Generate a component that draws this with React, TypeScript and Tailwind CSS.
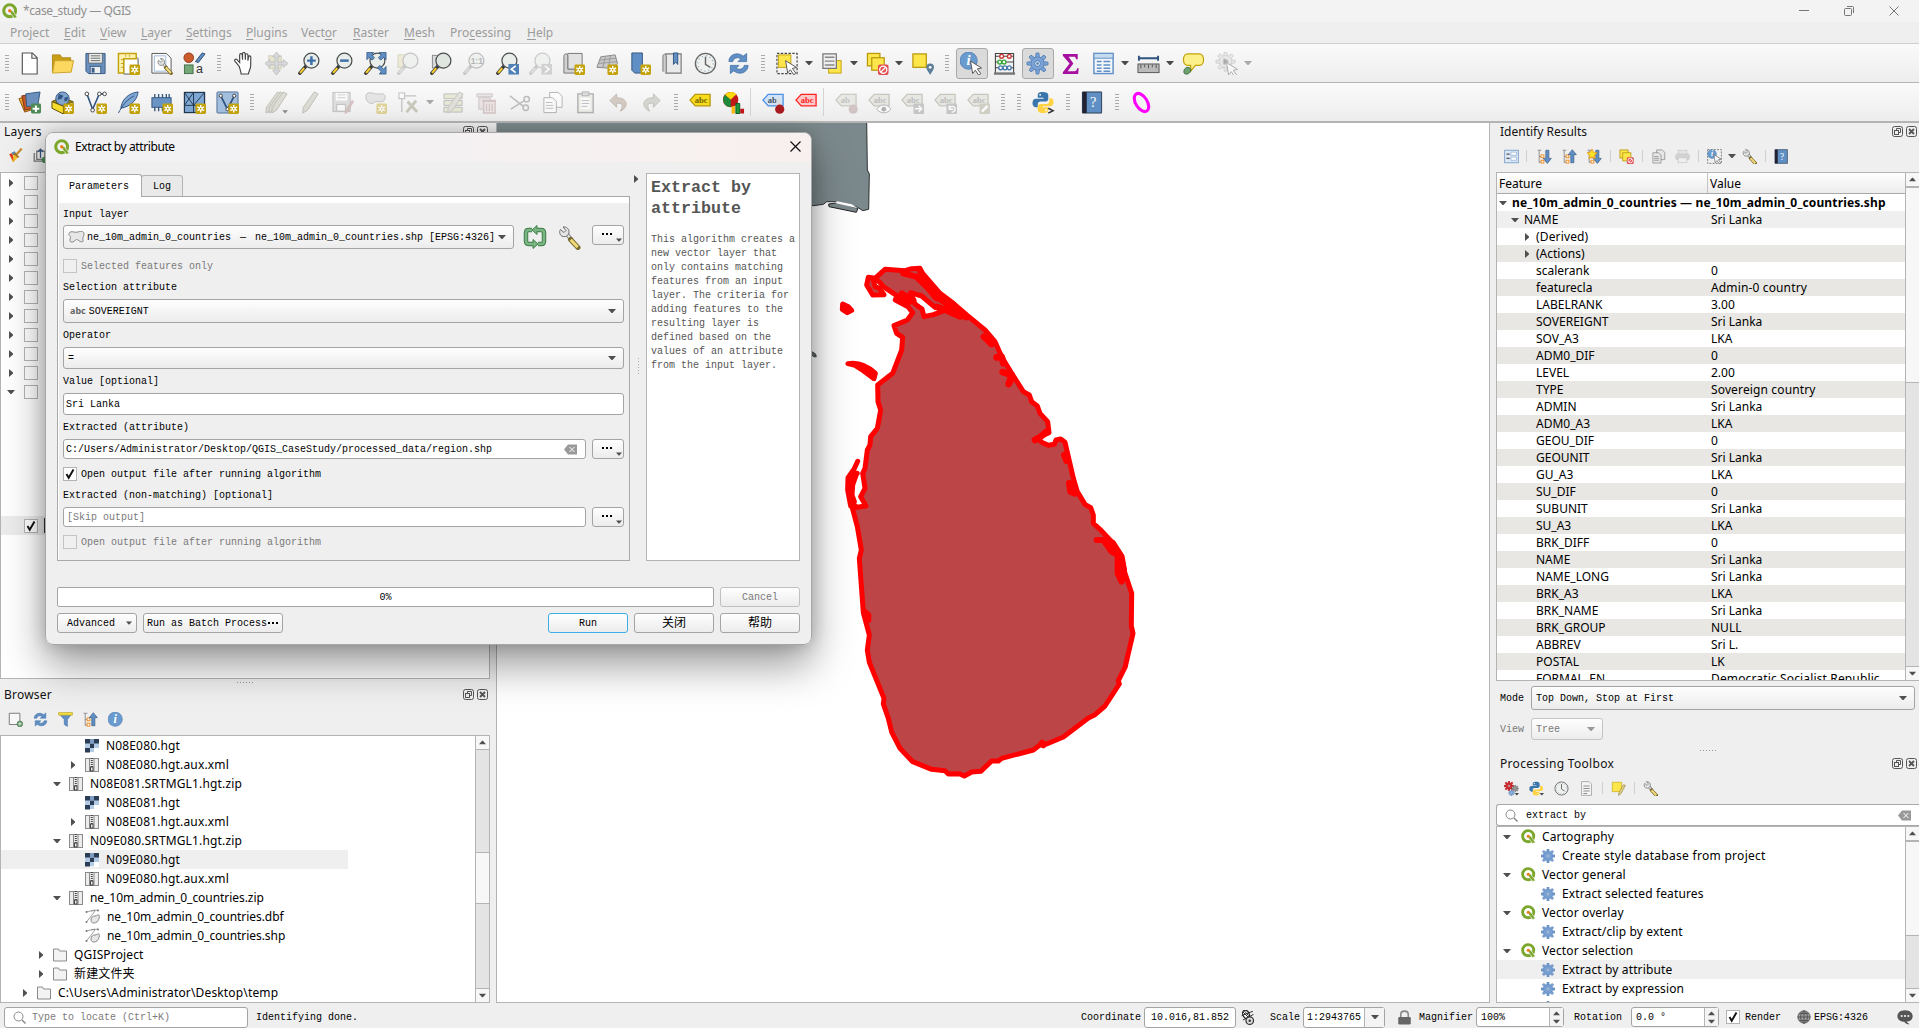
import React from "react";

type P = { children?: React.ReactNode; className?: string };

const SANS = "font-['Noto_Sans','Noto_Sans_CJK_SC',sans-serif]";
const MONO = "font-['Liberation_Mono','Noto_Sans_CJK_SC',monospace]";

const Svg = ({ s = 24, vb = 24, children, className = "" }: { s?: number; vb?: number } & P) => (
  <svg width={s} height={s} viewBox={`0 0 ${vb} ${vb}`} fill="none" className={`shrink-0 ${className}`}>
    {children}
  </svg>
);

/* ---------- shared glyph parts ---------- */
const Star = () => (
  <g>
    <rect x="13" y="13" width="11" height="11" rx="1.5" fill="#c4a20a" />
    <path d="M18.5 14.5v8M15 16.5l7 4M22 16.5l-7 4" stroke="#fff" strokeWidth="1.5" />
    <circle cx="18.5" cy="18.5" r="2" fill="#fff" />
    <circle cx="18.5" cy="18.5" r="0.9" fill="#c4a20a" />
  </g>
);
const Lens = ({ fill = "#e9eeea", handle = "#fcd12a", stroke = "#4b4f50" }) => (
  <g>
    <path d="M8.5 14.5L2 22" stroke={handle === "#ccc" ? "#999" : "#3a3a3a"} strokeWidth="3.6" strokeLinecap="round" />
    <path d="M6.5 16.8L2.2 21.8" stroke={handle} strokeWidth="2.2" />
    <circle cx="14" cy="9" r="7.8" fill={fill} stroke={stroke} strokeWidth="1.3" />
  </g>
);
const Cursor = ({ x = 10, y = 9 }) => (
  <path transform={`translate(${x} ${y})`} d="M0 0l11.5 7.2-4.4.9 3.6 5-2.2 1.6-3.5-5.2L2.2 13z" fill="#fff" stroke="#555" strokeWidth="1" />
);
const Gear = ({ c = "#7ba3d6", d = "#4a78b0", cx = 12, cy = 12, r = 11 }) => (
  <g transform={`translate(${cx} ${cy}) scale(${r / 11})`}>
    {[0, 45, 90, 135, 180, 225, 270, 315].map((a) => (
      <path key={a} transform={`rotate(${a})`} d="M-2.2 -6L-1.4 -11L1.4 -11L2.2 -6z" fill={c} stroke={d} strokeWidth="0.8" />
    ))}
    <circle r="6.800" fill={c} stroke={d} strokeWidth="0.5" />
    <circle r="3" fill="#dbe6f4" stroke={d} strokeWidth="1" />
    <circle r="1.3" fill={d} />
  </g>
);
const Sync = () => (
  <g>
    <path d="M2 10C2 4 8 .5 14 2.5l3 1.8L20.500 1.500V10h-9l3-3C11 5 7 6 6 10z" fill="#5f8fc4" stroke="#3f6fa6" strokeWidth=".8" />
    <path d="M22 14c0 6-6 9.500-12 7.500l-3-1.800L3.500 22.500V14h9l-3 3c3.500 2 7.500 1 8.500-3z" fill="#5f8fc4" stroke="#3f6fa6" strokeWidth=".8" />
  </g>
);
const Python = () => (
  <g>
    <path d="M11 1c-4 0-5 1.300-5 3.500V7h6v1H4C1.500 8 .5 10 .5 12.500S2 17 4 17h2v-3c0-2 1.300-3 3-3h5c1.700 0 3-1.300 3-3V4.500C17 2 15 1 11 1z" fill="#3a76ab" />
    <circle cx="8.500" cy="4" r="1" fill="#fff" />
    <path d="M12 23c4 0 5-1.300 5-3.500V17h-6v-1h8c2.500 0 3.500-2 3.500-4.500S21.500 7.500 19 7.500h-1v3c0 2-1.300 3-3 3H9c-1.700 0-3 1.300-3 3v3C6 22 8 23 12 23z" fill="#ffd342" />
    <circle cx="14.500" cy="20" r="1" fill="#fff" />
  </g>
);
const Wrench = () => (
  <g>
    <path d="M9 8.500L14 14" stroke="#6b6b6b" strokeWidth="4" />
    <path d="M9 8.500L14 14" stroke="#e4e6e4" strokeWidth="2.500" />
    <path d="M2.500 3.500l3.500 3 2-2L5 1C8.500.5 11.500 3 11 7c-1 3-4 4.500-7 3.200C2 9 .8 6 2.500 3.500z" fill="#e4e6e4" stroke="#6b6b6b" />
    <path d="M12.500 13.500l7.500 8" stroke="#7a6a30" strokeWidth="5" strokeLinecap="round" />
    <path d="M12.700 13.700l7 7.400" stroke="#f0d978" strokeWidth="3" />
  </g>
);
const AbcTag = ({ fill, stroke, color, text = "abc" }: { fill: string; stroke: string; color: string; text?: string }) => (
  <g>
    <path d="M1 9.500L6.500 3.500H22v12H6.500z" fill={fill} stroke={stroke} strokeWidth="1.400" />
    <text x="6" y="12.500" fontSize="9" fontWeight="bold" fontFamily="Liberation Serif, serif" fill={color}>{text}</text>
  </g>
);
const Book = () => (
  <g>
    <path d="M1.500 1h20v22h-20z" fill="#5f8fc4" stroke="#2c3e50" />
    <path d="M1.500 1H6v22H1.500z" fill="#223" />
    <text x="9.500" y="17" fontSize="15" fontFamily="Liberation Serif, serif" fill="#fff">?</text>
  </g>
);
const Pencil = ({ x = 0 }) => (
  <path transform={`translate(${x} 0)`} d="M16 1l4 2L9 20l-5 3 .5-6z" fill="#cfcdbf" stroke="#9b9a92" />
);
const Info = ({ x = 0, y = 0, r = 9 }) => (
  <g>
    <circle cx={x + r} cy={y + r} r={r} fill="#6a9bcf" stroke="#4a78b0" strokeWidth=".8" />
    <text x={x + r} y={y + r * 1.55} textAnchor="middle" fontSize={r * 1.7} fontWeight="bold" fontStyle="italic" fontFamily="Liberation Serif, serif" fill="#fff">i</text>
  </g>
);
const TreeArrow = ({ up = false }) => (
  <g>
    <path d="M1 2h6M3.500 2v20M3.500 12H8M3.500 21H8" stroke="#888" strokeWidth="1.400" />
    <rect x="6.500" y="9.500" width="4.500" height="4.500" fill="#fff" stroke="#ef8a1d" strokeWidth="1.500" />
    <rect x="6.500" y="18" width="4.500" height="4.500" fill="#fff" stroke="#ef8a1d" strokeWidth="1.500" />
    <path transform={up ? "" : "matrix(1 0 0 -1 0 24)"} d="M16.500 1l6.500 8h-4v13h-5V9h-4z" fill="#5f8fc4" stroke="#34577f" />
  </g>
);
const QLogo = ({ s = 16 }) => (
  <Svg s={s}>
    <circle cx="11.500" cy="11.500" r="8.900" stroke="#7ca72d" strokeWidth="4.600" />
    <path d="M12 11.500l3.500-.3L23 21.500l-4.500 1.500-6-8z" fill="#7ca72d" stroke="#f4f4f0" strokeWidth="1" />
    <circle cx="11.600" cy="11.600" r="2.500" fill="#ee7913" />
  </Svg>
);

const icons: Record<string, React.ReactNode> = {
  fileNew: <path d="M4.500 1h10.500l5 5v17H4.500zM14.500 1v5.500H20" fill="#fff" stroke="#555" strokeWidth="1.200" />,
  open: <g><path d="M1.500 21V3h8l2 3h9v4" fill="#c99f18" stroke="#b08a1c" /><path d="M1.500 22L4 9h19.500L21 21z" fill="#fcd860" stroke="#c9a22b" /></g>,
  save: <g><path d="M2 1.500h20v21H4.500L2 20z" fill="#6a8fbc" stroke="#3b5d86" /><rect x="5" y="1.500" width="14" height="10" fill="#eef0ee" stroke="#555" strokeWidth=".7" /><path d="M7 4h10M7 6.500h10M7 9h10" stroke="#666" /><rect x="6.500" y="15" width="11" height="7.500" fill="#eee" stroke="#3b5d86" /><rect x="8" y="16.500" width="3" height="5" fill="#3b5d86" /></g>,
  layout: <g><path d="M7 3h11l4 4v16H7z" fill="#fff" stroke="#555" /><path d="M1.500 22V1.500H20V7H7v15z" fill="#fdf2b4" stroke="#c4a20a" strokeWidth="1.500" /><path d="M4 8h3M4 12h3M4 16h3M9 3v2M13 3v2" stroke="#c4a20a" /><Star /></g>,
  layoutMgr: <g><path d="M2 1.500h15l5 5V22H2z" fill="#fff" stroke="#555" /><path d="M4.500 4h12v16h-12z" stroke="#9cb8d8" /><g transform="translate(7 6) scale(.75)"><Wrench /></g></g>,
  style: <g><circle cx="6" cy="6" r="5" fill="#cc5b2b" stroke="#8f3c19" /><path d="M13 10L20 1l3 1-7 9z" fill="#5f8fc4" stroke="#2c4a70" /><rect x="1.500" y="13.500" width="9" height="9" fill="#74a877" stroke="#44704a" /><text x="13.500" y="22" fontSize="13" fontFamily="Liberation Sans" fill="#333">a</text></g>,
  hand: <path d="M7.500 15L3 9.500c-.8-1.500 1-2.600 2.200-1.500L8 11V3c0-1.800 2.500-1.800 2.700 0l.3 5V1.800c.2-1.700 2.500-1.700 2.700 0L14 8V3c.2-1.600 2.400-1.600 2.600 0V9l.6-4c.4-1.400 2.300-1.200 2.400.3L19.500 14c0 3-1.500 5-2.500 9H9.500c0-3-1.500-5.500-2-8z" fill="#fff" stroke="#444" strokeWidth="1.200" />,
  panSel: <g opacity=".55"><rect x="4" y="4" width="13" height="13" fill="#dcd8b0" stroke="#b5b08a" /><path d="M12 0l4 5h-2.500v5.500H19V8l5 4-5 4v-2.500h-5.500V19H16l-4 5-4-5h2.500v-5.500H5V16l-5-4 5-4v2.500h5.500V5H8z" fill="#bfc3c6" stroke="#999" /></g>,
  zoomIn: <g><Lens /><path d="M14 4.500v9M9.500 9h9" stroke="#3f70ab" strokeWidth="2.600" /></g>,
  zoomOut: <g><Lens /><path d="M9.500 9h9" stroke="#3f70ab" strokeWidth="2.600" /></g>,
  zoomFull: <g><Lens /><path d="M3 .5h7L8 3l3 3-2.500 2.500-3-3L3 8zM23 .5h-7l2 2.500-3 3 2.500 2.500 3-3L23 8zM23 23h-7l2-2.500-4-4 2.500-2.500 4 4L23 15z" fill="#5f8fc4" stroke="#2f547f" strokeWidth=".8" /></g>,
  zoomSel: <g opacity=".45"><rect x="1" y="3" width="13" height="13" fill="#e4dfb0" stroke="#b5b08a" /><Lens handle="#ccc" stroke="#888" /></g>,
  zoomLayer: <g><rect x="2.500" y="3.500" width="12" height="13" fill="#d9dcdc" stroke="#888" /><Lens fill="#dfe5df" /></g>,
  zoomNative: <g opacity=".5"><Lens handle="#ccc" stroke="#888" /><text x="8" y="12.500" fontSize="9" fontFamily="Liberation Sans" fontWeight="bold" fill="#777">1:1</text></g>,
  zoomLast: <g><Lens /><rect x="13" y="12.500" width="11" height="11" fill="#4f81b7" /><path d="M20.500 14.500L16 18l4.500 3.500" stroke="#fff" strokeWidth="1.800" /></g>,
  zoomNext: <g opacity=".45"><Lens handle="#ccc" stroke="#999" /><rect x="13" y="12.500" width="11" height="11" fill="#aaa" /><path d="M16.500 14.500L21 18l-4.500 3.500" stroke="#fff" strokeWidth="1.800" /></g>,
  newMap: <g><path d="M6 1.500h15V18H6z" fill="#e2e2e2" stroke="#777" /><path d="M2 22V4.500c0-3.500 4-3.500 4 0V18h15v4z" fill="#d2d2d2" stroke="#777" /><Star /></g>,
  new3d: <g><path d="M6 5l15-2 2.500 9L17 17l-15-1z" fill="#c8c8c8" stroke="#888" /><path d="M11 4.500L8 16.500M16 4l-2 13M4 12l19-2M5 8.500l17-2" stroke="#999" /><Star /></g>,
  newBook: <g><path d="M4 1h11v21H7l-3-3z" fill="#5f8fc4" stroke="#34577f" /><Star /></g>,
  bookmark: <g><path d="M5 2h16v20H5z" fill="#e9e9e9" stroke="#777" strokeWidth="1.200" /><path d="M2 20.500V4.500c0-3 3.500-3 3.500 0V22" fill="#cfcfcf" stroke="#777" /><path d="M13 1h4.500v12l-2.200-2.500L13 13z" fill="#5f8fc4" stroke="#34577f" /></g>,
  clock: <g><circle cx="12" cy="12" r="10.500" fill="#eef1ee" stroke="#666" strokeWidth="1.400" /><path d="M12 5v8l5 3" stroke="#666" strokeWidth="1.500" /><circle cx="12" cy="12" r="8" stroke="#8ba7c7" strokeDasharray="1 3.200" strokeWidth="1.500" /></g>,
  sync: <Sync />,
  select: <g><rect x="1" y="1.500" width="21" height="21" stroke="#444" strokeDasharray="2.500 1.500" strokeWidth="1.200" /><rect x="2.500" y="3" width="13" height="13" fill="#fde64b" stroke="#c4a20a" /><Cursor x={10} y={9} /></g>,
  selForm: <g><rect x="8" y="9" width="13" height="13" fill="#fde64b" stroke="#c4a20a" /><path d="M2 2h14v15H2z" fill="#eee" stroke="#777" strokeWidth="1.300" /><path d="M4 5.500h10M4 9.500h10M4 13.500h10" stroke="#888" strokeWidth="1.500" /></g>,
  deselect: <g><rect x="1.500" y="1.500" width="13" height="13" fill="#fde64b" stroke="#b8980c" strokeWidth="1.300" /><rect x="6" y="6" width="13" height="13" fill="#fde64b" stroke="#b8980c" strokeWidth="1.300" /><rect x="12.500" y="13" width="11" height="11" rx="2" fill="#e04c4f" /><circle cx="18" cy="18.500" r="3.700" stroke="#fff" strokeWidth="1.400" /><path d="M15.500 21l5-5" stroke="#fff" strokeWidth="1.400" /></g>,
  selLoc: <g><rect x="2" y="2" width="14" height="14" fill="#fde64b" stroke="#b8980c" strokeWidth="1.300" /><path d="M20 24c-3-5-4-6-4-8a4 4 0 018 0c0 2-1 3-4 8z" fill="#5b7f98" /><circle cx="20" cy="16" r="1.400" fill="#fff" /></g>,
  identify: <g><Info r={9} x={0} y={0} /><Cursor x={11} y={9.500} /></g>,
  abacus: <g><path d="M2.500 22V1.500h19V22M2.500 4.500h19M2.500 10.500h19M2.500 16.500h19" stroke="#444" strokeWidth="1.100" /><path d="M1 22.500h22" stroke="#777" strokeWidth="2.500" /><g strokeWidth="1.400" fill="#fff"><circle cx="9" cy="4.500" r="2" stroke="#c33" /><circle cx="17" cy="4.500" r="2" stroke="#c33" /><circle cx="7" cy="10.500" r="2" stroke="#3a3" /><circle cx="11.500" cy="10.500" r="2" stroke="#3a3" /><circle cx="8" cy="16.500" r="2" stroke="#47a" /><circle cx="12.500" cy="16.500" r="2" stroke="#47a" /><circle cx="17" cy="16.500" r="2" stroke="#47a" /></g></g>,
  gear: <Gear />,
  sigma: <path d="M4 2h15.500v5.500h-1.700C17.500 5.500 17 5 15 5H10l5 7-6 8h7c2 0 2.500-1 3-3h1.500L20 23H4v-2l7-9L4 4z" fill="#a6109f" />,
  table: <g><rect x="2" y="1.500" width="20" height="21" fill="#f2f6fb" stroke="#5f8fc4" strokeWidth="1.500" /><path d="M2 1.500h20v5H2z" fill="#c7dbf0" stroke="#5f8fc4" /><path d="M5 10h5M12 10h7M5 13.500h5M12 13.500h7M5 17h5M12 17h7M5 20h5M12 20h7" stroke="#5f8fc4" strokeWidth="1.500" /></g>,
  ruler: <g><path d="M2 6.500h20M2 4v5M22 4v5" stroke="#2f547f" strokeWidth="2" /><rect x="1" y="12.500" width="22" height="9" fill="#bbb" stroke="#555" /><path d="M4 13v4M8 13v3M12 13v4M16 13v3M20 13v4" stroke="#555" /></g>,
  bubble: <g><path d="M6 2h12c6 0 6 12 0 12h-4l-5 6v-6H6C0 14 0 2 6 2z" fill="#fbf08a" stroke="#c4a20a" strokeWidth="1.300" /><path d="M2 20c0-2 2-4 4-4s4 2 3 4-3 3.500-5 3-2-1-2-3z" fill="#6da06f" stroke="#3f7043" /></g>,
  action: <g opacity=".45"><Gear c="#ddd" d="#888" cx={11} cy={10} r={10} /><path d="M9 6.500v7l5-3.500z" fill="#555" /><Cursor x={12} y={11} /></g>,
  dsm: <g><path d="M1 8l9-3 6 14-9 3z" fill="#f0a92e" stroke="#8a5312" /><path d="M4 5l10-1 3 14-10 2z" fill="#c35727" stroke="#7c3512" /><path d="M8 3l15-2-2.500 15L9 16z" fill="#6a8fbc" stroke="#34577f" /><rect x="13.500" y="13" width="10.500" height="10.500" rx="1.500" fill="#4d8a57" /><path d="M18.700 15v7M15.200 18.500h7" stroke="#fff" strokeWidth="2" /></g>,
  gpkg: <g><path d="M1 11l9-4 13 4-9 4z" fill="#b89a10" stroke="#5c4d08" /><circle cx="12" cy="8" r="7" fill="#7fa3cc" stroke="#34577f" /><path d="M8 3l5 2-2 3-4 1zM14 7l4-1-1 4-3 1z" fill="#2f547f" /><path d="M1 11l12 5v8L1 18z" fill="#f7dc2a" stroke="#5c4d08" /><path d="M23 11l-10 5v8l10-5z" fill="#fbe96e" stroke="#5c4d08" /><Star /></g>,
  shp: <g><path d="M3 3l6 16L16 3h5" stroke="#2f547f" strokeWidth="1.600" /><g fill="#fff" stroke="#444"><circle cx="3" cy="3" r="1.900" /><circle cx="9" cy="20" r="1.900" /><circle cx="16" cy="3" r="1.900" /><circle cx="21.500" cy="3" r="1.900" /></g><Star /></g>,
  feather: <g><path d="M22 1C12 2 5 9 4 18l4-1c8-3 13-8 14-16z" fill="#7fa8d4" stroke="#2f547f" /><path d="M1.500 23C5 16 10 9 18 5" stroke="#2f547f" /><Star /></g>,
  mem: <g><path d="M5 3v5M9 3v5M13 3v5M17 3v5M5 16v5M9 16v5M13 16v5M20 3v5" stroke="#34577f" strokeWidth="1.400" /><rect x="2" y="7" width="20" height="10" fill="#6a94c4" stroke="#34577f" /><Star /></g>,
  mesh: <g><rect x="1.500" y="1.500" width="21" height="21" fill="#7fa8d4" stroke="#22384f" strokeWidth="1.300" /><path d="M1.500 15h21M11 1.500v21M1.500 1.500L11 15l11.500-13.500M1.500 15L11 1.500" stroke="#22384f" /><Star /></g>,
  virt: <g><rect x="1" y="1" width="22" height="22" rx="1" fill="#a3bfdd" stroke="#4d6f96" /><path d="M5 5l7 14 7-14" stroke="#2f547f" strokeWidth="1.800" /><g fill="#fff" stroke="#444"><circle cx="5" cy="5" r="1.700" /><circle cx="12" cy="19" r="1.700" /><circle cx="19" cy="5" r="1.700" /></g><Star /></g>,
  edits: <g opacity=".6"><Pencil x={-3} /><Pencil x={0} /><Pencil x={3} /><path d="M18 20h6l-3 3.500z" fill="#444" /></g>,
  pencil: <g opacity=".6"><Pencil x={1} /></g>,
  saveEd: <g opacity=".4"><path d="M2 1.500h18v20H2z" fill="#bbb" stroke="#777" /><rect x="5" y="2" width="12" height="8" fill="#fff" /><path d="M7 4h8M7 7h8" stroke="#999" /><rect x="6" y="14" width="9" height="7" fill="#fff" stroke="#777" /><path d="M22 9l2 2-7 12-3 1 1-4z" fill="#a77" /></g>,
  addPoly: <g opacity=".4"><path d="M2 6c0-6 7-4 10-3s10-2 10 3-3 6-7 5-5 3-8 2-5-3-5-7z" fill="#ccc" stroke="#777" /><Star /></g>,
  vertex: <g opacity=".4"><path d="M5 5v17M5 5h15" stroke="#777" strokeWidth="1.300" /><rect x="2" y="2" width="6" height="6" fill="#fff" stroke="#666" /><path d="M10 22L20 10M11 11l10 11" stroke="#8a8868" strokeWidth="3" /></g>,
  modAttr: <g opacity=".5"><path d="M2 3h19v5H2zM2 10h19v5H2zM2 17h19v5H2z" fill="#dcdcb8" stroke="#888" /><Pencil x={2} /></g>,
  trash: <g opacity=".42"><path d="M2 3h16v3H2zM4 7h12v12H4z" fill="#dcc" stroke="#988" /><path d="M7 10h15M9 11h12v12H9zM12 13v8M15 13v8M18 13v8" fill="#ecdcdc" stroke="#a88" strokeWidth="1.500" /></g>,
  cut: <g opacity=".5" stroke="#888" strokeWidth="1.600"><path d="M2 5l14 11M3 19L17 10" /><circle cx="18.500" cy="17.500" r="2.800" /><circle cx="19.500" cy="8.500" r="2.800" /></g>,
  copy: <g opacity=".6"><path d="M9 1.500h9l4 4V17H9z" fill="#fff" stroke="#888" /><path d="M3 7h9l4 4v11.500H3z" fill="#fff" stroke="#888" /><path d="M5 12h7M5 15h8M5 18h8" stroke="#999" /></g>,
  paste: <g opacity=".6"><rect x="4" y="3" width="16" height="19.500" fill="#e8e8e0" stroke="#888" strokeWidth="1.500" /><rect x="8.500" y="1" width="7" height="4" fill="#ccc" stroke="#888" /><path d="M7 7h10v12H7z" fill="#fff" /><path d="M8 10h8M8 13h8M8 16h6" stroke="#999" /></g>,
  undo: <path opacity=".55" d="M10 3L3 10l7 7v-4c5-1 8 1 4 8 9-4 8-14-4-14z" fill="#b9a89a" stroke="#9a8c80" />,
  redo: <path opacity=".55" d="M14 3l7 7-7 7v-4c-5-1-8 1-4 8-9-4-8-14 4-14z" fill="#bcbcb4" stroke="#9a9a90" />,
  abcY: <AbcTag fill="#f6dc1d" stroke="#b8980c" color="#7a6400" />,
  pie: <g><circle cx="9" cy="9" r="8" fill="#c01818" /><path d="M9 9L3 4a8 8 0 0112-.5z" fill="#fbd80e" /><path d="M9 9L3 4a8 8 0 006 13z" fill="#1c8a3a" /><path d="M10 16h3.500v7.500H10z" fill="#fbb80e" /><path d="M14.500 13h4v10.500h-4z" fill="#1c9a3a" stroke="#0b5a20" /><path d="M19 18.500h4v5h-4z" fill="#c01818" /></g>,
  abcB: <g><AbcTag fill="#cfe3fa" stroke="#4d8fe0" color="#456" text="ab" /><path d="M17 7v10" stroke="#ddd" strokeWidth="3.500" /><circle cx="18.500" cy="19" r="4.800" fill="#a81c20" /></g>,
  abcR: <AbcTag fill="#fbc9c9" stroke="#f22" color="#f22" />,
  abc1: <g opacity=".55"><AbcTag fill="#e0e0d8" stroke="#aaa89a" color="#999" text="ab" /><circle cx="19" cy="19" r="4.800" fill="#b9a0a0" /></g>,
  abc2: <g opacity=".6"><AbcTag fill="#e0e0d8" stroke="#aaa89a" color="#999" /><path d="M9 19c4-6 11-6 15 0-4 5-11 5-15 0z" fill="#fff" stroke="#888" /><circle cx="16.500" cy="19" r="2.500" fill="#888" /></g>,
  abc3: <g opacity=".6"><AbcTag fill="#e0e0d8" stroke="#aaa89a" color="#999" /><rect x="13" y="13" width="11" height="11" rx="1" fill="#aaa" /><path d="M14.500 18.500h7M18.500 15.500l3 3-3 3" stroke="#fff" strokeWidth="1.700" /></g>,
  abc4: <g opacity=".6"><AbcTag fill="#e0e0d8" stroke="#aaa89a" color="#999" /><rect x="13" y="13" width="11" height="11" rx="1" fill="#aaa" /><path d="M16 19a3 3 0 112.500 3M16 15v4h4" stroke="#fff" strokeWidth="1.500" /></g>,
  abc5: <g opacity=".6"><AbcTag fill="#e0e0d8" stroke="#aaa89a" color="#999" /><rect x="13" y="13" width="11" height="11" rx="1" fill="#bbb9a5" /><path d="M15.500 21.500l6-6" stroke="#fff" strokeWidth="2.500" /></g>,
  python: <g><Python /><path d="M17 18l5 2.500-5 2.500" stroke="#333" strokeWidth="1.500" /></g>,
  book: <Book />,
  magenta: <ellipse cx="12" cy="12" rx="6" ry="10.500" transform="rotate(-32 12 12)" stroke="#ff00ff" strokeWidth="3.200" />,
};

const Cell = ({ n, on }: { n: string; on?: boolean }) => (
  <div className="flex h-[38px] w-[33px] shrink-0 items-center justify-center">
    <div className={on ? "flex h-[31px] w-[32px] items-center justify-center rounded-[3px] border border-[#a9a9a9] bg-[#dadada]" : "flex items-center justify-center"}>
      <Svg s={23}>{icons[n]}</Svg>
    </div>
  </div>
);
const Grip = ({ w = "w-4" }) => (
  <div className={`flex h-[38px] shrink-0 items-center justify-center ${w}`}>
    <div className="h-[18px] w-[4px] bg-[radial-gradient(circle,#aaa_0.7px,transparent_0.9px)] bg-[size:2px_3px]" />
  </div>
);
const Tri = ({ c = "#4f4f4f", dir = "down", s = 8 }: { c?: string; dir?: string; s?: number }) => (
  <svg width={s} height={s} viewBox="0 0 8 8" className="shrink-0">
    <path d={dir === "down" ? "M0 2h8L4.500 6h-1z" : dir === "up" ? "M0 6h8L4.500 2h-1z" : "M2 0v8L6 4.500v-1z"} fill={c} />
  </svg>
);
const Drop = ({ dim }: { dim?: boolean }) => (
  <div className="flex w-3 shrink-0 items-center pl-[1px]">
    <Tri c={dim ? "#a8a8a8" : "#4a4a4a"} />
  </div>
);
const Sep = () => (
  <div className="flex h-[38px] w-[7px] shrink-0 items-center justify-start"><div className="h-7 w-px bg-[#d4d4d4]" /></div>
);

function render(seq: string) {
  return seq.split(" ").map((t, i) => {
    if (t === "|") return <Grip key={i} />;
    if (t === "v") return <Drop key={i} />;
    if (t === "V") return <Drop key={i} dim />;
    if (t === "/") return <Sep key={i} />;
    if (t.startsWith("!")) return <Cell key={i} n={t.slice(1)} on />;
    return <Cell key={i} n={t} />;
  });
}

const DockHead = ({ title, pl = "pl-1" }: { title: string; pl?: string }) => (
  <div className={`flex h-[17px] shrink-0 items-center justify-between ${pl} ${SANS} text-[12px] text-[#111]`}>
    <span className={title === "Processing Toolbox" ? "tracking-[0.32px]" : title === "Identify Results" ? "" : "tracking-[0.2px]"}>{title}</span>
    <div className="flex gap-[3px] pr-[2px]">
      <Svg s={11} vb={11}><rect x=".5" y=".5" width="10" height="10" rx="2" stroke="#555" /><rect x="2.500" y="4.500" width="4" height="4" stroke="#555" /><path d="M4.500 4V2.500h4v4H7" stroke="#555" /></Svg>
      <Svg s={11} vb={11}><rect x=".5" y=".5" width="10" height="10" rx="2" stroke="#555" /><path d="M3 3l5 5M8 3L3 8" stroke="#555" strokeWidth="1.800" /></Svg>
    </div>
  </div>
);

const Check = ({ on, dim }: { on?: boolean; dim?: boolean }) => (
  <div className={`flex h-[14px] w-[14px] shrink-0 items-center justify-center border ${dim ? "border-[#c4c4c4] bg-[#f0f0f0]" : "border-[#b4b4b4] bg-white"}`}>
    {on && <Svg s={12} vb={12}><path d="M2.500 6l2.200 3.800L9.500 1.500" stroke="#111" strokeWidth="1.900" /></Svg>}
  </div>
);

const Scroll = ({ pre, thumb }: { pre: number; thumb: number }) => (
  <div className="flex w-[14px] shrink-0 flex-col border-l border-[#b4b4b4] bg-[#e4e4e4]">
    <div className="flex h-[14px] items-center justify-center border-b border-[#b4b4b4] bg-[#f7f7f7]"><Tri dir="up" s={7} /></div>
    <div style={{ height: pre }} />
    <div className="border-y border-[#b4b4b4] bg-[#f7f7f7]" style={{ height: thumb }} />
    <div className="flex-1" />
    <div className="flex h-[14px] items-center justify-center border-t border-[#b4b4b4] bg-[#f7f7f7]"><Tri s={7} /></div>
  </div>
);

const ZipI = () => <Svg s={14} vb={14}><rect x=".5" y=".5" width="13" height="13" fill="#ededed" stroke="#8a8a8a" /><path d="M4.500.5v13M9 .5v13" stroke="#8a8a8a" /><path d="M6.800 0v9" stroke="#444" strokeWidth="2" strokeDasharray="1 1" /><rect x="5.500" y="9" width="2.500" height="4" stroke="#444" /></Svg>;
const RasI = () => <Svg s={14} vb={14}><path d="M0 0h14v13H0z" fill="#b4cbe6" /><path d="M0 0h5v4.500H0zM9 0h5v4.500H9zM5 4.500h4v4.500H5zM0 9h5v4.500H0z" fill="#2a3d55" /><path d="M5 0h4v4.500H5z" fill="#7f9dc2" /><path d="M9 9h5v5H9z" fill="#fff" /></Svg>;
const VecI = () => <Svg s={15} vb={15}><path d="M1 3l9-2M1.500 13L10 2M6 2l7-1" stroke="#888" strokeWidth=".8" /><circle cx="1.500" cy="3" r="1" fill="#777" /><circle cx="1.500" cy="13" r="1" fill="#777" /><circle cx="13" cy="1.500" r="1" fill="#777" /><path d="M6 11c0-3 2-4 4-4s3-2 4-1 0 8-5 8c-2 0-3-1-3-3z" fill="#e6e6e6" stroke="#888" /></Svg>;
const DirI = () => <Svg s={14} vb={14}><path d="M.5 13V1H5.500l1 2H13.500v10z" fill="#f3f3f3" stroke="#8a8a8a" /></Svg>;

const browserRows: [number, string, React.ReactNode, string][] = [
  [80, "", <RasI />, "N08E080.hgt"],
  [80, "r", <ZipI />, "N08E080.hgt.aux.xml"],
  [64, "d", <ZipI />, "N08E081.SRTMGL1.hgt.zip"],
  [80, "", <RasI />, "N08E081.hgt"],
  [80, "r", <ZipI />, "N08E081.hgt.aux.xml"],
  [64, "d", <ZipI />, "N09E080.SRTMGL1.hgt.zip"],
  [80, "s", <RasI />, "N09E080.hgt"],
  [80, "", <ZipI />, "N09E080.hgt.aux.xml"],
  [64, "d", <ZipI />, "ne_10m_admin_0_countries.zip"],
  [80, "", <VecI />, "ne_10m_admin_0_countries.dbf"],
  [80, "", <VecI />, "ne_10m_admin_0_countries.shp"],
  [48, "r", <DirI />, "QGISProject"],
  [48, "r", <DirI />, "新建文件夹"],
  [32, "r", <DirI />, "C:\\Users\\Administrator\\Desktop\\temp"],
];

const attrs: [string, string][] = [
  ["scalerank", "0"], ["featurecla", "Admin-0 country"], ["LABELRANK", "3.00"], ["SOVEREIGNT", "Sri Lanka"],
  ["SOV_A3", "LKA"], ["ADM0_DIF", "0"], ["LEVEL", "2.00"], ["TYPE", "Sovereign country"], ["ADMIN", "Sri Lanka"],
  ["ADM0_A3", "LKA"], ["GEOU_DIF", "0"], ["GEOUNIT", "Sri Lanka"], ["GU_A3", "LKA"], ["SU_DIF", "0"],
  ["SUBUNIT", "Sri Lanka"], ["SU_A3", "LKA"], ["BRK_DIFF", "0"], ["NAME", "Sri Lanka"], ["NAME_LONG", "Sri Lanka"],
  ["BRK_A3", "LKA"], ["BRK_NAME", "Sri Lanka"], ["BRK_GROUP", "NULL"], ["ABBREV", "Sri L."], ["POSTAL", "LK"],
  ["FORMAL_EN", "Democratic Socialist Republic ..."],
];

const tools: [boolean, string][] = [
  [true, "Cartography"], [false, "Create style database from project"],
  [true, "Vector general"], [false, "Extract selected features"],
  [true, "Vector overlay"], [false, "Extract/clip by extent"],
  [true, "Vector selection"], [false, "Extract by attribute"], [false, "Extract by expression"], [false, ""],
];

const Small = ({ children, w = 25 }: { children: React.ReactNode; w?: number }) => (
  <div className="flex shrink-0 items-center justify-center" style={{ width: w }}><Svg s={15}>{children}</Svg></div>
);
const SmallSep = () => <div className="flex w-[7px] shrink-0 justify-center"><div className="h-[12px] w-px bg-[#cfcfcf]" /></div>;
const Dots = () => (
  <div className="flex justify-center gap-[2px]">
    {[0, 1, 2, 3, 4, 5].map((i) => <div key={i} className="h-px w-px bg-[#9a9a9a]" />)}
  </div>
);

function LeftDock() {
  return (
    <div className="flex w-[490px] shrink-0 flex-col">
      <DockHead title="Layers" />
      <div className="flex h-[32px] shrink-0 items-center pb-px pl-[3px]">
        <Small><path d="M2 10l9-4 6 8-9 9z" fill="#f2c230" /><path d="M2 10l5-2 2 14z" fill="#e3352f" /><path d="M6 7l5-2 2 5-5 1z" fill="#4a90d9" /><path d="M12 12L22 1" stroke="#c98a2b" strokeWidth="3.500" /><path d="M9 8l8 7" stroke="#a06a1e" strokeWidth="2.500" /></Small>
        <Small><path d="M2 8v13h14M6 5h13v13H6z" stroke="#777" strokeWidth="2" /><path d="M12 16V3M8 6l4-4 4 4" stroke="#34577f" strokeWidth="2" /><circle cx="19" cy="19" r="5" fill="#4d8a57" /></Small>
      </div>
      <div className="h-[507px] w-[490px] shrink-0 overflow-hidden border border-[#b4b4b4] bg-white">
        {Array.from({ length: 12 }, (_, i) => (
          <div key={i} className="flex h-[19px] items-center pl-[6px]">
            <Tri dir={i === 11 ? "down" : "right"} />
            <div className="w-[9px]" />
            <Check />
          </div>
        ))}
        <div className="flex h-[115px] items-center pl-11"><div className="h-[112px] w-2 bg-gradient-to-b from-[#ddd] to-black" /></div>
        <div className="flex h-[19px] items-center bg-[#ececec] pl-[23px]"><Check on /><div className="ml-[6px] h-[15px] w-4 border border-[#333] bg-[#7c898c]" /></div>
      </div>
      <div className="flex h-[6px] flex-col justify-center"><Dots /></div>
      <div className="h-[1px]" />
      <DockHead title="Browser" />
      <div className="flex h-[32px] shrink-0 items-center pl-[3px]">
        <Small><path d="M2 2h17v18H2z" fill="#f7f7f7" stroke="#777" strokeWidth="1.500" /><circle cx="19" cy="19" r="4.500" fill="#6da06f" stroke="#3f7043" /><path d="M19 16v6M16 19h6" stroke="#fff" /></Small>
        <Small><Sync /></Small>
        <Small><path d="M1 2h22l-8 10v11l-5-3v-8z" fill="#5f8fc4" stroke="#4a78b0" /><path d="M1 1h22v4H1z" fill="#f4e04a" stroke="#c4a20a" /></Small>
        <Small><TreeArrow up /></Small>
        <Small><Info r={11.500} /></Small>
      </div>
      <div className="flex min-h-0 flex-1 border border-[#b4b4b4] bg-white">
        <div className={`flex-1 overflow-hidden ${SANS} text-[12px] text-black`}>
          {browserRows.map(([x, st, ic, t], i) => (
            <div key={i} className={`flex h-[19px] items-center whitespace-nowrap ${st === "s" ? "w-[347px] bg-[#efefef]" : ""}`}>
              <div className="flex shrink-0 justify-end pr-[8px]" style={{ width: x + 4 }}>
                {st === "r" && <Tri dir="right" />}{st === "d" && <Tri />}
              </div>
              {ic}
              <span className={`ml-[7px] ${t.startsWith("ne_") ? "tracking-[-0.05px]" : "tracking-[0.15px]"}`}>{t}</span>
            </div>
          ))}
        </div>
        <Scroll pre={102} thumb={52} />
      </div>
    </div>
  );
}

function MapCanvas() {
  return (
    <div className="ml-[6px] h-full min-w-0 flex-1 overflow-hidden border-x border-b border-[#b4b4b4] bg-white">
      <svg width="992" height="880" viewBox="497 123 992 880" fill="none">
        <g transform="translate(480 120) scale(.33333)">
          <path d="M0 0H1160L1162 150L1168 162L1166 268L1148 272L1133 262L1064 245L1040 245L1030 253L1000 257L0 260z" fill="#7c898c" stroke="#2b2f30" strokeWidth="3" />
          <path d="M1046 252l30-4 58 17-5 12-82-17z" fill="#7c898c" stroke="#222" strokeWidth="3" />
          <path d="M1065 249l68 16-18-12-44-9z" fill="#fff" />
          <path d="M985 688l22 14 2 8-6 1-22-15z" fill="#5f6a6d" stroke="#222" strokeWidth="2" />
        </g>
        <g transform="translate(820 240) scale(.33333)" stroke="#f00" strokeWidth="15" strokeLinejoin="round" strokeLinecap="round">
          <path fill="#bc4547" d="M165 115L195 88L255 92L275 86L300 85L308 100L360 160L400 190L440 225L495 270L525 305L545 350L575 400L588 420L610 455L628 465L635 485L652 498L660 520L683 545L687 578L650 595L668 608L685 616L703 613L708 600L722 597L735 607L745 650L760 715L772 755L795 793L812 803L820 825L820 850L840 868L875 905L905 955L914 997L935 1060L934 1158L939 1180L918 1270L916 1280L895 1322L898 1332L855 1398L825 1424L805 1434L730 1491L680 1512L666 1510L640 1530L545 1555L535 1563L515 1563L482 1594L455 1596L433 1608L418 1601L385 1602L375 1592L335 1588L278 1565L240 1525L215 1476L205 1435L190 1392L192 1375L148 1267L142 1230L148 1185L130 1118L118 955L124 930L112 860L92 785L110 802L138 798L122 770L135 745L128 700L135 685L142 630L150 615L152 590L172 565L182 510L174 485L173 435L218 400L245 330L248 292L230 280L222 257L262 240L278 218L264 200L226 180L235 170L190 140L180 128z" />
          <path fill="#fff" d="M272 158L305 168L345 202L378 210L340 224L312 230L306 207L285 192z" />
          <path d="M165 115L145 112L140 135L158 165L192 164L178 145L165 140L160 120" fill="#bc4547" />
          <path d="M250 100L288 110L360 178L430 226M300 95L360 170M228 178L270 185L245 160L280 180M350 200L440 232M380 212L420 230" strokeWidth="18" />
          <path d="M310 122L350 172" strokeWidth="24" />
          <path d="M68 192L67 208L82 218L95 211L85 200z" fill="#f00" />
          <path d="M84 371C115 366 145 380 166 400L162 416L130 392L105 376z" fill="#f00" />
          <path d="M113 664L102 688L84 713L83 750L92 798M110 700L98 735L96 765L103 785M112 700L90 720L90 770" />
          <path d="M492 290L515 312M530 352L545 350L550 370M548 396L575 405L566 432L575 415M645 600L660 592L680 575M733 645L740 662M748 730L752 755L765 760" strokeWidth="20" />
          <path d="M830 900L850 900L875 935L893 945L893 1000L905 1025L912 990L905 950L878 908M134 1115L145 1125L145 1140M666 1508L670 1516" strokeWidth="18" />
        </g>
      </svg>
    </div>
  );
}

function RightDock() {
  return (
    <div className="ml-[6px] flex w-[423px] shrink-0 flex-col">
      <DockHead title="Identify Results" pl="pl-[4px]" />
      <div className="flex h-[32px] shrink-0 items-center pl-[3px]">
        <Small w={24}><rect x="1" y="2" width="22" height="20" fill="#dce8f5" stroke="#7fa3cc" strokeWidth="1.500" /><path d="M4 8h5M4 15h5" stroke="#555" strokeWidth="2" /><path d="M11 5h9v5h-9zM11 13h9v5h-9z" fill="#fff" stroke="#7fa3cc" /></Small>
        <SmallSep />
        <div className="w-[2px]" /><Small><TreeArrow /></Small><Small><TreeArrow up /></Small>
        <Small><TreeArrow /><path d="M8 0l2.500 5 5.500.8-4 4 1 5.700-5-2.700-5 2.700 1-5.700-4-4L5.500 5z" fill="#fbe02a" stroke="#e58f12" strokeWidth="1.200" /></Small>
        <SmallSep /><Small>{icons.deselect}</Small><SmallSep />
        <Small w={24}><g stroke="#777"><path d="M9 1.500h9l4 4V17H9z" fill="#e6e6e6" /><path d="M3 6h9l4 4v12.500H3z" fill="#e6e6e6" /><path d="M5 12h7M5 15h8M5 18h8" /></g></Small>
        <Small><g opacity=".5"><rect x="5" y="2" width="14" height="7" fill="#ddd" stroke="#999" /><rect x="1" y="8" width="22" height="9" rx="3" fill="#bbb" stroke="#999" /><rect x="5" y="14" width="14" height="8" fill="#eee" stroke="#999" /></g></Small>
        <SmallSep />
        <Small w={24}><rect x="1" y="1" width="22" height="22" stroke="#777" strokeDasharray="3 2" strokeWidth="1.500" /><Info r={7} x={1} y={1} /><Cursor x={11} y={9} /></Small>
        <div className="flex w-[11px] justify-center"><Tri /></div>
        <Small><g transform="scale(1.08)"><Wrench /></g></Small><SmallSep /><Small>{icons.book}</Small>
      </div>
      <div className="flex h-[509px] shrink-0 border border-r-0 border-[#b4b4b4] bg-white">
        <div className={`flex-1 overflow-hidden whitespace-nowrap ${SANS} text-[12px] text-black`}>
          <div className="flex h-[21px] items-center border-b border-[#a9a9a9] bg-gradient-to-b from-white to-[#ececec] leading-[22px]">
            <div className="h-full w-[211px] border-r border-[#c4c4c4] pl-[2px]">Feature</div>
            <div className="h-full pl-[2px]">Value</div>
          </div>
          <div className="flex h-[17px] items-center pl-[2px] font-bold"><Tri /><span className="ml-[5px] tracking-[0.14px]">ne_10m_admin_0_countries — ne_10m_admin_0_countries.shp</span></div>
          <div className="flex h-[17px] items-center bg-[#efefef]"><div className="flex w-[214px] items-center pl-[14px]"><Tri /><span className="ml-[5px]">NAME</span></div>Sri Lanka</div>
          <div className="flex h-[17px] items-center pl-[26px] tracking-[0.15px]"><Tri dir="right" /><span className="ml-[5px]">(Derived)</span></div>
          <div className="flex h-[17px] items-center bg-[#e8e7e3] pl-[26px]"><Tri dir="right" /><span className="ml-[5px]">(Actions)</span></div>
          {attrs.map(([k, v], i) => (
            <div key={i} className={`flex h-[17px] items-center ${i % 2 ? "bg-[#e8e7e3]" : "bg-white"}`}>
              <div className="w-[214px] shrink-0 pl-[39px]">{k}</div><span className={v.length > 12 ? "tracking-[0.14px]" : ""}>{v}</span>
            </div>
          ))}
        </div>
        <Scroll pre={0} thumb={196} />
      </div>
      <div className={`flex h-[34px] items-center pl-[3px] pr-[4px] ${MONO} text-[10px] text-black`}>
        <span className="w-[32px] pl-[1px]">Mode</span>
        <Combo className="h-[24px] flex-1">Top Down, Stop at First</Combo>
      </div>
      <div className={`flex h-[28px] items-center pl-[3px] ${MONO} text-[10px] text-[#7a7a7a]`}>
        <span className="w-[32px] pl-[1px]">View</span>
        <Combo className="h-[22px] w-[72px]" dim>Tree</Combo>
      </div>
      <div className="flex h-[8px] flex-col justify-end"><Dots /></div>
      <div className="h-[4px]" />
      <DockHead title="Processing Toolbox" pl="pl-[4px]" />
      <div className="flex h-[32px] shrink-0 items-center pl-[3px]">
        <Small><Gear c="#d4262c" d="#a3151a" cx={8} cy={8} r={8} /><Gear c="#888" d="#666" cx={18} cy={12} r={5.500} /><Gear cx={12} cy={19} r={5} /><path d="M17 19h7l-3.500 4z" fill="#444" /></Small>
        <Small><Python /><path d="M17 19h7l-3.500 4z" fill="#444" /></Small>
        <Small>{icons.clock}</Small>
        <Small><path d="M4 1h12l4 4v18H4z" fill="#f4f4f4" stroke="#888" /><path d="M7 8h10M7 12h10M7 16h10M7 20h6" stroke="#888" strokeWidth="1.500" /></Small>
        <SmallSep />
        <Small><path d="M2 2h15v15H2z" fill="#fde64b" stroke="#c4a20a" /><path d="M20 6l3 1-7 13-4 3 1-5z" fill="#e8d98c" stroke="#887733" /></Small>
        <SmallSep /><Small><g transform="scale(1.08)"><Wrench /></g></Small>
      </div>
      <div className="flex h-[22px] shrink-0 items-center justify-between rounded-l-[3px] border border-r-0 border-[#a9a9a9] bg-white pl-[8px] pr-[8px]">
        <div className={`flex items-center gap-[8px] ${MONO} text-[10px]`}>
          <Svg s={13} vb={13}><circle cx="5.500" cy="5.500" r="4.500" stroke="#888" /><path d="M9 9l3.500 3.500" stroke="#888" strokeWidth="1.500" /></Svg>
          <span>extract by</span>
        </div>
        <Clear />
      </div>
      <div className="flex min-h-0 flex-1 border border-r-0 border-[#b4b4b4] bg-white">
        <div className={`flex-1 overflow-hidden whitespace-nowrap ${SANS} text-[12px] text-black`}>
          {tools.map(([top, t], i) =>
            top ? (
              <div key={i} className="flex h-[19px] items-center pl-[6px]"><Tri /><div className="w-[10px]" /><QLogo s={15} /><span className="ml-[6px] tracking-[0.12px]">{t}</span></div>
            ) : (
              <div key={i} className={`flex h-[19px] items-center pl-[44px] ${i === 7 ? "bg-[#efefef]" : ""}`}><Svg s={14}><Gear r={12} /></Svg><span className={`ml-[7px] ${i === 1 ? "tracking-[0.29px]" : "tracking-[0.13px]"}`}>{t}</span></div>
            )
          )}
        </div>
        <Scroll pre={0} thumb={95} />
      </div>
    </div>
  );
}

const Clear = () => (
  <Svg s={13} vb={13}><path d="M4 1.500h9v10H4L0 6.500z" fill="#999" /><path d="M5.500 4l5 5M10.500 4l-5 5" stroke="#fff" /></Svg>
);
const Combo = ({ children, className = "", dim }: P & { dim?: boolean }) => (
  <div className={`flex items-center justify-between whitespace-nowrap rounded-[3px] border bg-gradient-to-b from-[#fefefe] to-[#ececec] pl-[4px] pr-[7px] ${dim ? "border-[#c4c4c4]" : "border-[#a4a4a4]"} ${className}`}>
    <span className="flex min-w-0 items-center overflow-hidden">{children}</span>
    <Tri c={dim ? "#999" : "#4f4f4f"} />
  </div>
);
const Btn = ({ children, className = "" }: P) => (
  <div className={`flex h-[20px] shrink-0 items-center justify-center whitespace-nowrap rounded-[3px] border bg-gradient-to-b from-[#fefefe] to-[#ececec] ${className}`}>{children}</div>
);
const Ellipsis = () => (
  <span className="inline-flex w-[12px] justify-around">
    <i className="h-[2px] w-[2px] bg-black" /><i className="h-[2px] w-[2px] bg-black" /><i className="h-[2px] w-[2px] bg-black" />
  </span>
);
const DotsBtn = ({ h = "h-[20px]" }) => (
  <Btn className={`relative w-[32px] self-start border-[#a4a4a4] pb-[3px] ${h}`}>
    <span className="-ml-[2px] flex"><Ellipsis /></span>
    <span className="absolute bottom-[1px] right-[1px] flex"><Tri s={6} /></span>
  </Btn>
);
const Label = ({ children, className = "" }: P) => <div className={`flex items-center ${className}`}>{children}</div>;
const Field = ({ children, className = "" }: P) => (
  <div className={`flex items-center justify-between rounded-[3px] border border-[#a4a4a4] bg-white pl-[2px] ${className}`}>{children}</div>
);

function Dialog() {
  return (
    <div className={`absolute left-[45px] top-[132px] flex h-[513px] w-[767px] flex-col overflow-hidden rounded-[8px] border border-[#a6a6a6] bg-[#efefef] ${MONO} text-[10px] text-black`}>
      <div className="flex h-[29px] shrink-0 items-center bg-gradient-to-r from-[#f1f1f3] via-[#f4f1f2] to-[#f8f0ee] pb-[2px] pl-[8px] pr-[10px]">
        <QLogo s={16} />
        <span className={`ml-[5px] flex-1 ${SANS} text-[12px] tracking-[-0.4px]`}>Extract by attribute</span>
        <Svg s={11} vb={11}><path d="M.5.5l10 10M10.500.5l-10 10" stroke="#111" strokeWidth="1.200" /></Svg>
      </div>
      <div className="flex h-[399px] shrink-0 pl-[11px] pr-[11px] pt-[11px]">
        <div className="flex w-[573px] flex-col">
          <div className="flex h-[23px] items-end">
            <div className="z-10 -mb-px flex h-[23px] w-[85px] items-center justify-center rounded-t-[3px] border border-b-0 border-[#a9a9a9] bg-white pr-px">Parameters</div>
            <div className="-ml-px flex h-[21px] w-[42px] items-center justify-center rounded-t-[3px] border border-b-0 border-[#b4b4b4] bg-[#e9e9e9]">Log</div>
          </div>
          <div className="flex h-[365px] flex-col border border-[#a9a9a9] bg-white pt-[6px]">
            <div className="ml-[1px] flex flex-1 flex-col bg-[#efefef] pl-[4px] pr-[5px]">
              <Label className="h-[22px]">Input layer</Label>
              <div className="flex h-[24px] items-center">
                <Combo className="h-[24px] w-[451px]">
                  <Svg s={18} vb={18}><path d="M2 4c3-1 5 1 8 0s6-1 6 2-2 3-1 6-3 2-5 0-4 3-7 2 1-5-1-6-1-3 0-4z" fill="#e6e6e6" stroke="#8a8a8a" /></Svg>
                  <span className="ml-[1px]">ne_10m_admin_0_countries <span className="inline-block w-[12px] text-center">—</span> ne_10m_admin_0_countries.shp [EPSG:4326]</span>
                </Combo>
                <div className="flex w-[41px] justify-center">
                  <Svg s={24}>
                    <path d="M9 5H5.500Q3 5 3 8v8q0 3 3 3h4M15 19h3.500q2.500 0 2.500-3V8q0-3-3-3h-4" stroke="#3f7f4a" strokeWidth="4.500" />
                    <path d="M10 14.500V23.500L15 19zM14 .5V9.500L9 5z" fill="#7bb583" stroke="#3f7f4a" />
                    <path d="M9 5H5.500Q3 5 3 8v8q0 3 3 3h5M15 19h3.500q2.500 0 2.500-3V8q0-3-3-3h-5" stroke="#7bb583" strokeWidth="2.500" />
                  </Svg>
                </div>
                <div className="flex w-[30px] justify-center pt-[2px]"><Svg s={24}><Wrench /></Svg></div>
                <div className="flex-1" />
                <DotsBtn h="h-[19px]" />
              </div>
              <Label className="mt-[10px] h-[14px] text-[#7a7a7a]"><Check dim /><span className="ml-[4px]">Selected features only</span></Label>
              <Label className="mt-[3px] h-[23px]">Selection attribute</Label>
              <Combo className="h-[24px]"><b className={`mr-[3px] pl-[2px] ${SANS} text-[9px] leading-3 text-[#666]`}>abc</b>SOVEREIGNT</Combo>
              <Label className="h-[24px]">Operator</Label>
              <Combo className="h-[22px]">=</Combo>
              <Label className="h-[24px]">Value [optional]</Label>
              <Field className="h-[22px]">Sri Lanka</Field>
              <Label className="h-[24px]">Extracted (attribute)</Label>
              <div className="flex h-[20px] justify-between">
                <Field className="w-[523px] pr-[8px]"><span>C:/Users/Administrator/Desktop/QGIS_CaseStudy/processed_data/region.shp</span><Clear /></Field>
                <DotsBtn />
              </div>
              <Label className="mt-[8px] h-[14px]"><Check on /><span className="ml-[4px]">Open output file after running algorithm</span></Label>
              <Label className="mt-[3px] h-[23px]">Extracted (non-matching) [optional]</Label>
              <div className="flex h-[20px] justify-between">
                <Field className="w-[523px] text-[#7a7a7a]"><span className="pl-[1px]">[Skip output]</span></Field>
                <DotsBtn />
              </div>
              <Label className="mt-[8px] h-[14px] text-[#7a7a7a]"><Check dim /><span className="ml-[4px]">Open output file after running algorithm</span></Label>
            </div>
          </div>
        </div>
        <div className="flex w-[16px] flex-col items-start justify-between pb-[185px] pl-[2px] pt-[2px]">
          <Tri dir="right" />
          <div className="ml-[6px] h-[18px] w-px bg-[repeating-linear-gradient(to_bottom,#aaa_0_1px,transparent_1px_3px)]" />
        </div>
        <div className="h-[388px] w-[154px] border border-[#b4b4b4] bg-white px-[4px] pt-[3px]">
          <div className="text-[16.66px] font-bold leading-[21px] text-[#555]">Extract by<br />attribute</div>
          <p className="mt-[14px] whitespace-nowrap leading-[14px] text-[#555]">
            This algorithm creates a<br />new vector layer that<br />only contains matching<br />features from an input<br />layer. The criteria for<br />adding features to the<br />resulting layer is<br />defined based on the<br />values of an attribute<br />from the input layer.
          </p>
        </div>
      </div>
      <div className="mt-[26px] flex shrink-0 gap-[6px] pl-[11px]">
        <div className="flex h-[20px] w-[657px] items-center justify-center rounded-[2px] border border-[#a4a4a4] bg-white">0%</div>
        <Btn className="w-[80px] border-[#c0c0c0] text-[#7a7a7a]">Cancel</Btn>
      </div>
      <div className="mt-[6px] flex shrink-0 gap-[6px] pl-[11px]">
        <Btn className="w-[80px] gap-[11px] border-[#a4a4a4] pl-[5px]">Advanced <Tri s={6} /></Btn>
        <Btn className="w-[140px] border-[#a4a4a4]">Run as Batch Process<Ellipsis /></Btn>
        <div className="w-[253px]" />
        <Btn className="w-[80px] border-[#3daee9] from-white to-[#e9f1f8]">Run</Btn>
        <Btn className="w-[80px] border-[#a4a4a4] pt-[2px] text-[12px]">关闭</Btn>
        <Btn className="w-[80px] border-[#a4a4a4] pt-[2px] text-[12px]">帮助</Btn>
      </div>
    </div>
  );
}

const Spin = ({ children, className = "" }: P) => (
  <div className={`flex h-[20px] items-stretch rounded-[3px] border border-[#a4a4a4] bg-white ${className}`}>
    <span className="flex flex-1 items-center pl-[4px]">{children}</span>
    <div className="flex w-[14px] flex-col items-center justify-center gap-[1px] border-l border-[#b4b4b4] bg-[#f4f4f4]"><Tri dir="up" s={7} /><Tri s={7} /></div>
  </div>
);

function StatusBar() {
  return (
    <div className={`flex h-[25px] shrink-0 items-center pt-[2px] ${MONO} whitespace-pre text-[10px] text-black`}>
      <div className="ml-[4px] mt-px flex h-[21px] w-[244px] items-center rounded-[3px] border border-[#a4a4a4] bg-white pl-[8px] text-[#7a7a7a]">
        <Svg s={13} vb={13}><circle cx="5.500" cy="5.500" r="4.500" stroke="#888" /><path d="M9 9l3.500 3.500" stroke="#888" strokeWidth="1.500" /></Svg>
        <span className="ml-[6px]">Type to locate (Ctrl+K)</span>
      </div>
      <span className="ml-[8px] w-[825px] pt-[2px]">Identifying done.</span>
      <div className="mt-px flex h-[21px] items-center">
        <span className="w-[63px]">Coordinate</span>
        <div className="flex h-[21px] w-[92px] items-center justify-center rounded-[3px] border border-[#a4a4a4] bg-white">10.016,81.852</div>
        <div className="flex w-[34px] items-center pl-[5px]"><Svg s={15}><ellipse cx="8" cy="7" rx="5" ry="7" transform="rotate(-25 8 7)" fill="#fff" stroke="#222" strokeWidth="2" /><path d="M3 3l9 9M5 1l7 8M1 9l18-7M3 16l17-9" stroke="#222" strokeWidth="1.500" /><circle cx="14" cy="17" r="6" fill="#ddd" stroke="#333" strokeWidth="2" /><circle cx="14" cy="17" r="2" fill="#333" /></Svg></div>
        <span className="w-[33px]">Scale</span>
        <div className="flex h-[21px] w-[82px] items-stretch rounded-[3px] border border-[#a4a4a4] bg-white">
          <span className="flex w-[61px] items-center border-r border-[#b4b4b4] pl-[3px]">1:2943765</span>
          <span className="flex flex-1 items-center justify-center bg-[#f4f4f4]"><Tri /></span>
        </div>
        <div className="flex w-[34px] justify-center pl-[4px]"><Svg s={15}><path d="M6 12V7c0-7 12-7 12 0v5" stroke="#888" strokeWidth="2.500" /><rect x="2" y="11" width="20" height="12" rx="2" fill="#666" /></Svg></div>
        <span className="w-[57px]">Magnifier</span>
        <Spin className="w-[88px]">100%</Spin>
        <span className="ml-[10px] w-[57px]">Rotation</span>
        <Spin className="w-[88px]">0.0 °</Spin>
        <div className="ml-[7px] flex w-[19px]"><Check on /></div>
        <span className="w-[52px]">Render</span>
        <Svg s={14} className="mr-[3px]"><circle cx="12" cy="12" r="10.500" fill="#999" stroke="#555" strokeWidth="1.500" /><path d="M1 12h22M12 1v22M4 6h16M4 18h16M12 1c-8 6-8 16 0 22M12 1c8 6 8 16 0 22" stroke="#444" strokeWidth="1.200" /></Svg>
        <span className="w-[83px]">EPSG:4326</span>
        <Svg s={16}><path d="M12 2c15 0 15 17 2 17l5 4c-5 0-7-2-8-4C-3 19-3 2 12 2z" fill="#555" /><path d="M5.500 10.500h3M10.500 10.500h3M15.500 10.500h3" stroke="#fff" strokeWidth="2.500" /></Svg>
      </div>
    </div>
  );
}

const menu: [string, string, string, number][] = [
  ["Pro", "j", "ect", 54], ["", "E", "dit", 36], ["", "V", "iew", 41], ["", "L", "ayer", 45], ["", "S", "ettings", 60], ["", "P", "lugins", 55],
  ["Vect", "o", "r", 52], ["", "R", "aster", 51], ["", "M", "esh", 46], ["Pro", "c", "essing", 77], ["", "H", "elp", 40],
];

export default function App() {
  return (
    <div className="relative flex h-[1028px] w-[1919px] flex-col overflow-hidden bg-[#efefef]">
      <div className={`flex h-[22px] shrink-0 items-center bg-[#f3f3f3] pl-[2px] ${SANS} text-[12px] text-[#8f8f8f]`}>
        <QLogo s={16} />
        <span className="ml-[5px] flex-1 tracking-[-0.4px]">*case_study — QGIS</span>
        <div className="flex items-center gap-[35px] pr-[20px]">
          <Svg s={10} vb={10}><path d="M0 4.500h10" stroke="#777" /></Svg>
          <Svg s={10} vb={10}><rect x=".5" y="2.500" width="7" height="7" rx="1" stroke="#777" /><path d="M3 .5h5.500a1 1 0 011 1V7" stroke="#777" /></Svg>
          <Svg s={10} vb={10}><path d="M.5.5l9 9M9.500.5l-9 9" stroke="#777" /></Svg>
        </div>
      </div>
      <div className={`flex h-[21px] shrink-0 items-center pl-[10px] ${SANS} text-[12px] text-[#9b9b9b]`}>
        {menu.map(([a, b, c, w], i) => (
          <span key={i} className="shrink-0 whitespace-nowrap" style={{ width: w }}>{a}<u className="underline-offset-2">{b}</u>{c}</span>
        ))}
      </div>
      <div className="flex h-[40px] shrink-0 items-center border-b border-t border-b-[#b4b4b4] border-t-[#d0d0d0] bg-gradient-to-b from-[#fafafa] to-[#ededed]">
        <Grip w="w-[13px]" />
        {render("fileNew open save layout layoutMgr style | hand panSel zoomIn zoomOut zoomFull zoomSel zoomLayer zoomNative zoomLast zoomNext newMap new3d newBook bookmark clock sync | select v selForm v deselect v selLoc | !identify abacus !gear sigma table v ruler v bubble action V")}
      </div>
      <div className="flex h-[40px] shrink-0 items-center border-b-2 border-[#b4b4b4] bg-gradient-to-b from-[#fafafa] to-[#ededed]">
        <Grip w="w-[13px]" />
        {render("dsm gpkg shp feather mem mesh virt | edits pencil saveEd addPoly vertex V modAttr trash cut copy paste undo redo | abcY pie / abcB abcR / abc1 abc2 abc3 abc4 abc5 | | python | book | magenta")}
      </div>
      <div className="flex h-[880px] shrink-0">
        <LeftDock />
        <MapCanvas />
        <RightDock />
      </div>
      <StatusBar />
      <div className="pointer-events-none absolute left-[45px] top-[132px] h-[513px] w-[767px] rounded-[8px] shadow-[0_20px_42px_rgba(0,0,0,0.4),0_0_16px_rgba(0,0,0,0.18)]" />
      <Dialog />
    </div>
  );
}
